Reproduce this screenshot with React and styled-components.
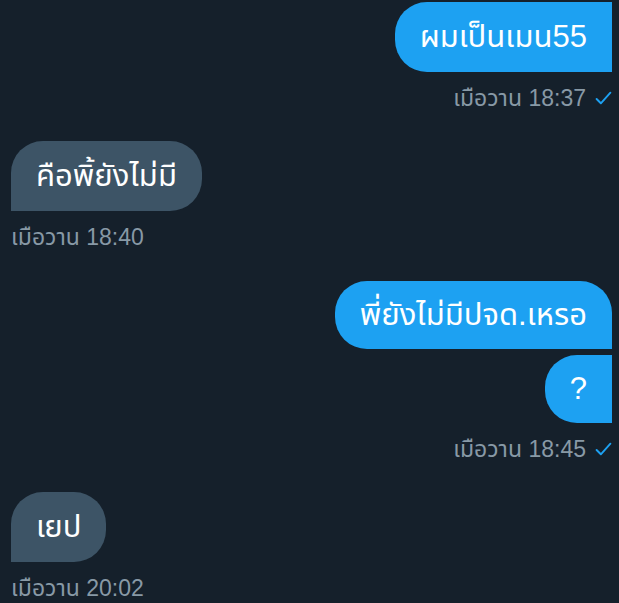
import React from 'react';
import styled, { createGlobalStyle } from 'styled-components';

const GlobalStyle = createGlobalStyle`
  html, body {
    margin: 0;
    padding: 0;
    background: #15202b;
  }
  body {
    font-family: "Liberation Sans", "Noto Sans Thai", "Noto Sans", sans-serif;
  }
`;

const Thread = styled.div`
  display: flex;
  flex-direction: column;
  padding: 2px 7px 0 11px;
  height: 603px;
  overflow: hidden;
  box-sizing: border-box;
  background: #15202b;
`;

const Group = styled.div`
  display: flex;
  flex-direction: column;
  align-items: ${p => (p.mine ? 'flex-end' : 'flex-start')};
  gap: 6px;
  margin-bottom: ${p => p.gap || 30}px;
`;

const Bubble = styled.div`
  box-sizing: border-box;
  height: ${p => p.h || 70}px;
  display: flex;
  align-items: center;
  padding: 0 25px;
  font-size: 31px;
  color: #ffffff;
  white-space: nowrap;
  background: ${p => (p.mine ? '#1da1f2' : '#3d5466')};
  border-radius: ${p => p.radius};
`;

const Stamp = styled.div`
  display: flex;
  align-items: center;
  gap: 9px;
  margin-top: 8px;
  font-size: 23px;
  color: #8899a6;
  line-height: 24px;
  white-space: nowrap;
`;

const Check = () => (
  <svg width="17" height="15" viewBox="0 0 16 14" fill="none">
    <path d="M1.5 7.5 L5.5 11.5 L14.5 1.5" stroke="#1da1f2" strokeWidth="1.8" strokeLinecap="round" strokeLinejoin="round" />
  </svg>
);

export default function App() {
  return (
    <>
      <GlobalStyle />
      <Thread>
        <Group mine gap={31}>
          <Bubble mine radius="32px 0 0 32px">ผมเป็นเมน55</Bubble>
          <Stamp>เมือวาน 18:37 <Check /></Stamp>
        </Group>

        <Group gap={32}>
          <Bubble radius="32px 32px 32px 0">คือพิ้ยังไม่มี</Bubble>
          <Stamp>เมือวาน 18:40</Stamp>
        </Group>

        <Group mine gap={31}>
          <Bubble mine h={68} radius="32px 32px 0 32px">พี่ยังไม่มีปจด.เหรอ</Bubble>
          <Bubble mine h={68} radius="32px 0 0 32px">?</Bubble>
          <Stamp>เมือวาน 18:45 <Check /></Stamp>
        </Group>

        <Group>
          <Bubble radius="32px 32px 32px 0">เยป</Bubble>
          <Stamp>เมือวาน 20:02</Stamp>
        </Group>
      </Thread>
    </>
  );
}
